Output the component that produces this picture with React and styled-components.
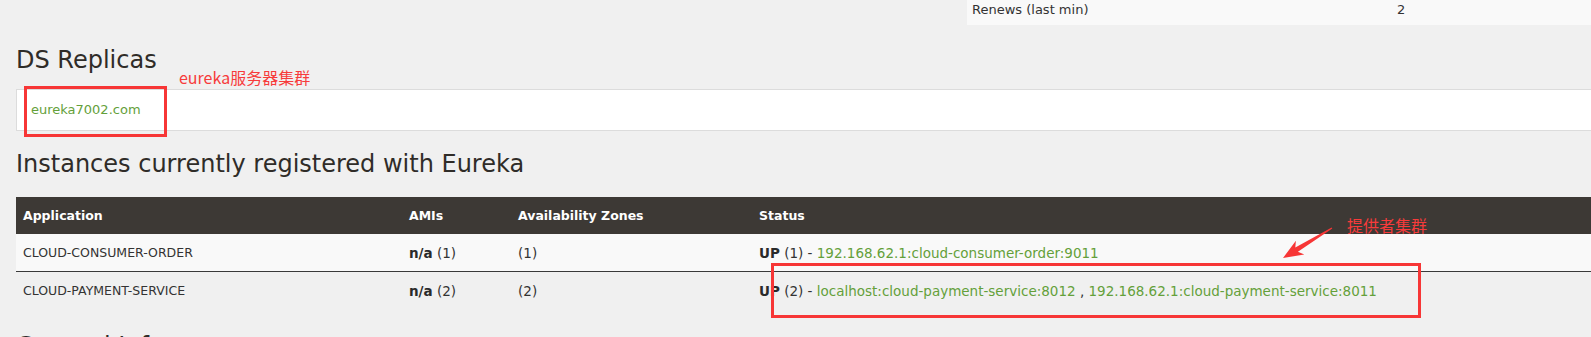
import React from "react";
import styled, { createGlobalStyle } from "styled-components";

const GlobalStyle = createGlobalStyle`
  body {
    margin: 0;
    background: #f0f0f0;
    color: #333;
    font-family: 'DejaVu Sans', 'Liberation Sans', sans-serif;
    overflow: hidden;
  }
  a { color: #64a03a; text-decoration: none; }
`;

const Page = styled.div`
  position: relative;
  height: 337px;
  overflow: hidden;
`;

const Content = styled.div`
  padding-left: 16px;
  margin-right: -20px;
`;

// system status table (only its last row is visible at the top)
const StatsRow = styled.div`
  display: grid;
  grid-template-columns: 425px 1fr;
  margin-left: 951px;
  background: #f9f9f9;
  font-size: 13px;
  line-height: 19px;
  padding-bottom: 6px;
  div { padding-left: 5px; }
`;

const Heading = styled.h2`
  margin: ${(p) => p.$top}px 0 0 0;
  font-size: 24px;
  font-weight: 400;
  line-height: 28px;
  color: #2f2c28;
`;

const ReplicaBox = styled.div`
  margin-top: 15px;
  height: 42px;
  box-sizing: border-box;
  background: #fff;
  border: 1px solid #dcdcdc;
  padding-left: 14px;
  line-height: 40px;
  font-size: 13px;
`;

const Table = styled.div`
  margin-top: 19px;
  font-size: 13.5px;
`;

const Row = styled.div`
  display: grid;
  grid-template-columns: 386px 109px 241px 1fr;
  align-items: center;
  height: 37px;
  background: ${(p) => (p.$head ? "#3d3935" : p.$odd ? "#f9f9f9" : "transparent")};
  color: ${(p) => (p.$head ? "#fff" : "#333")};
  font-size: ${(p) => (p.$head ? "12.5px" : "inherit")};
  font-weight: ${(p) => (p.$head ? 700 : 400)};
  border-bottom: ${(p) => (p.$odd ? "1px solid #3a3a3a" : "none")};
`;

const Cell = styled.div`
  padding-left: 7px;
  white-space: nowrap;
  b { font-weight: 700; color: #2a2a2a; }
`;

const AppName = styled(Cell)`
  font-size: 12.5px;
`;

// red screenshot annotations drawn over the page
const MarkBox = styled.div`
  position: absolute;
  left: ${(p) => p.$x}px;
  top: ${(p) => p.$y}px;
  width: ${(p) => p.$w}px;
  height: ${(p) => p.$h}px;
  box-sizing: border-box;
  border: 3px solid #f73636;
`;

const MarkText = styled.div`
  position: absolute;
  left: ${(p) => p.$x}px;
  top: ${(p) => p.$y}px;
  color: #f73b3b;
  font-family: 'Noto Sans CJK SC', 'DejaVu Sans', sans-serif;
  font-size: 16px;
  line-height: 20px;
  white-space: nowrap;
`;

const Arrow = styled.svg`
  position: absolute;
  left: 1275px;
  top: 220px;
`;

const instances = [
  {
    name: "CLOUD-CONSUMER-ORDER",
    count: 1,
    links: ["192.168.62.1:cloud-consumer-order:9011"],
  },
  {
    name: "CLOUD-PAYMENT-SERVICE",
    count: 2,
    links: [
      "localhost:cloud-payment-service:8012",
      "192.168.62.1:cloud-payment-service:8011",
    ],
  },
];

export default function App() {
  return (
    <Page>
      <GlobalStyle />
      <Content>
        <StatsRow>
          <div>Renews (last min)</div>
          <div>2</div>
        </StatsRow>

        <Heading $top={21}>DS Replicas</Heading>
        <ReplicaBox>
          <a href="#">eureka7002.com</a>
        </ReplicaBox>

        <Heading $top={19}>Instances currently registered with Eureka</Heading>
        <Table>
          <Row $head>
            <Cell>Application</Cell>
            <Cell>AMIs</Cell>
            <Cell>Availability Zones</Cell>
            <Cell>Status</Cell>
          </Row>
          {instances.map((app, i) => (
            <Row key={app.name} $odd={i % 2 === 0}>
              <AppName>{app.name}</AppName>
              <Cell>
                <b>n/a</b> ({app.count})
              </Cell>
              <Cell>({app.count})</Cell>
              <Cell>
                <b>UP</b> ({app.count}) -{" "}
                {app.links.map((l, j) => (
                  <React.Fragment key={l}>
                    {j > 0 && " , "}
                    <a href="#">{l}</a>
                  </React.Fragment>
                ))}
              </Cell>
            </Row>
          ))}
        </Table>

        <Heading $top={23}>General Info</Heading>
      </Content>

      <MarkBox $x={24} $y={86} $w={143} $h={51} />
      <MarkText $x={179} $y={67}>eureka服务器集群</MarkText>

      <MarkBox $x={771} $y={263} $w={650} $h={55} />
      <MarkText $x={1347} $y={215}>提供者集群</MarkText>
      <Arrow width="65" height="45" viewBox="0 0 65 45">
        <polygon
          points="56.7,7.6 20.3,27.5 20.9,20.8 8,38 29.3,34.4 22.9,31.7 57.3,8.4"
          fill="#f73636"
        />
      </Arrow>
    </Page>
  );
}
